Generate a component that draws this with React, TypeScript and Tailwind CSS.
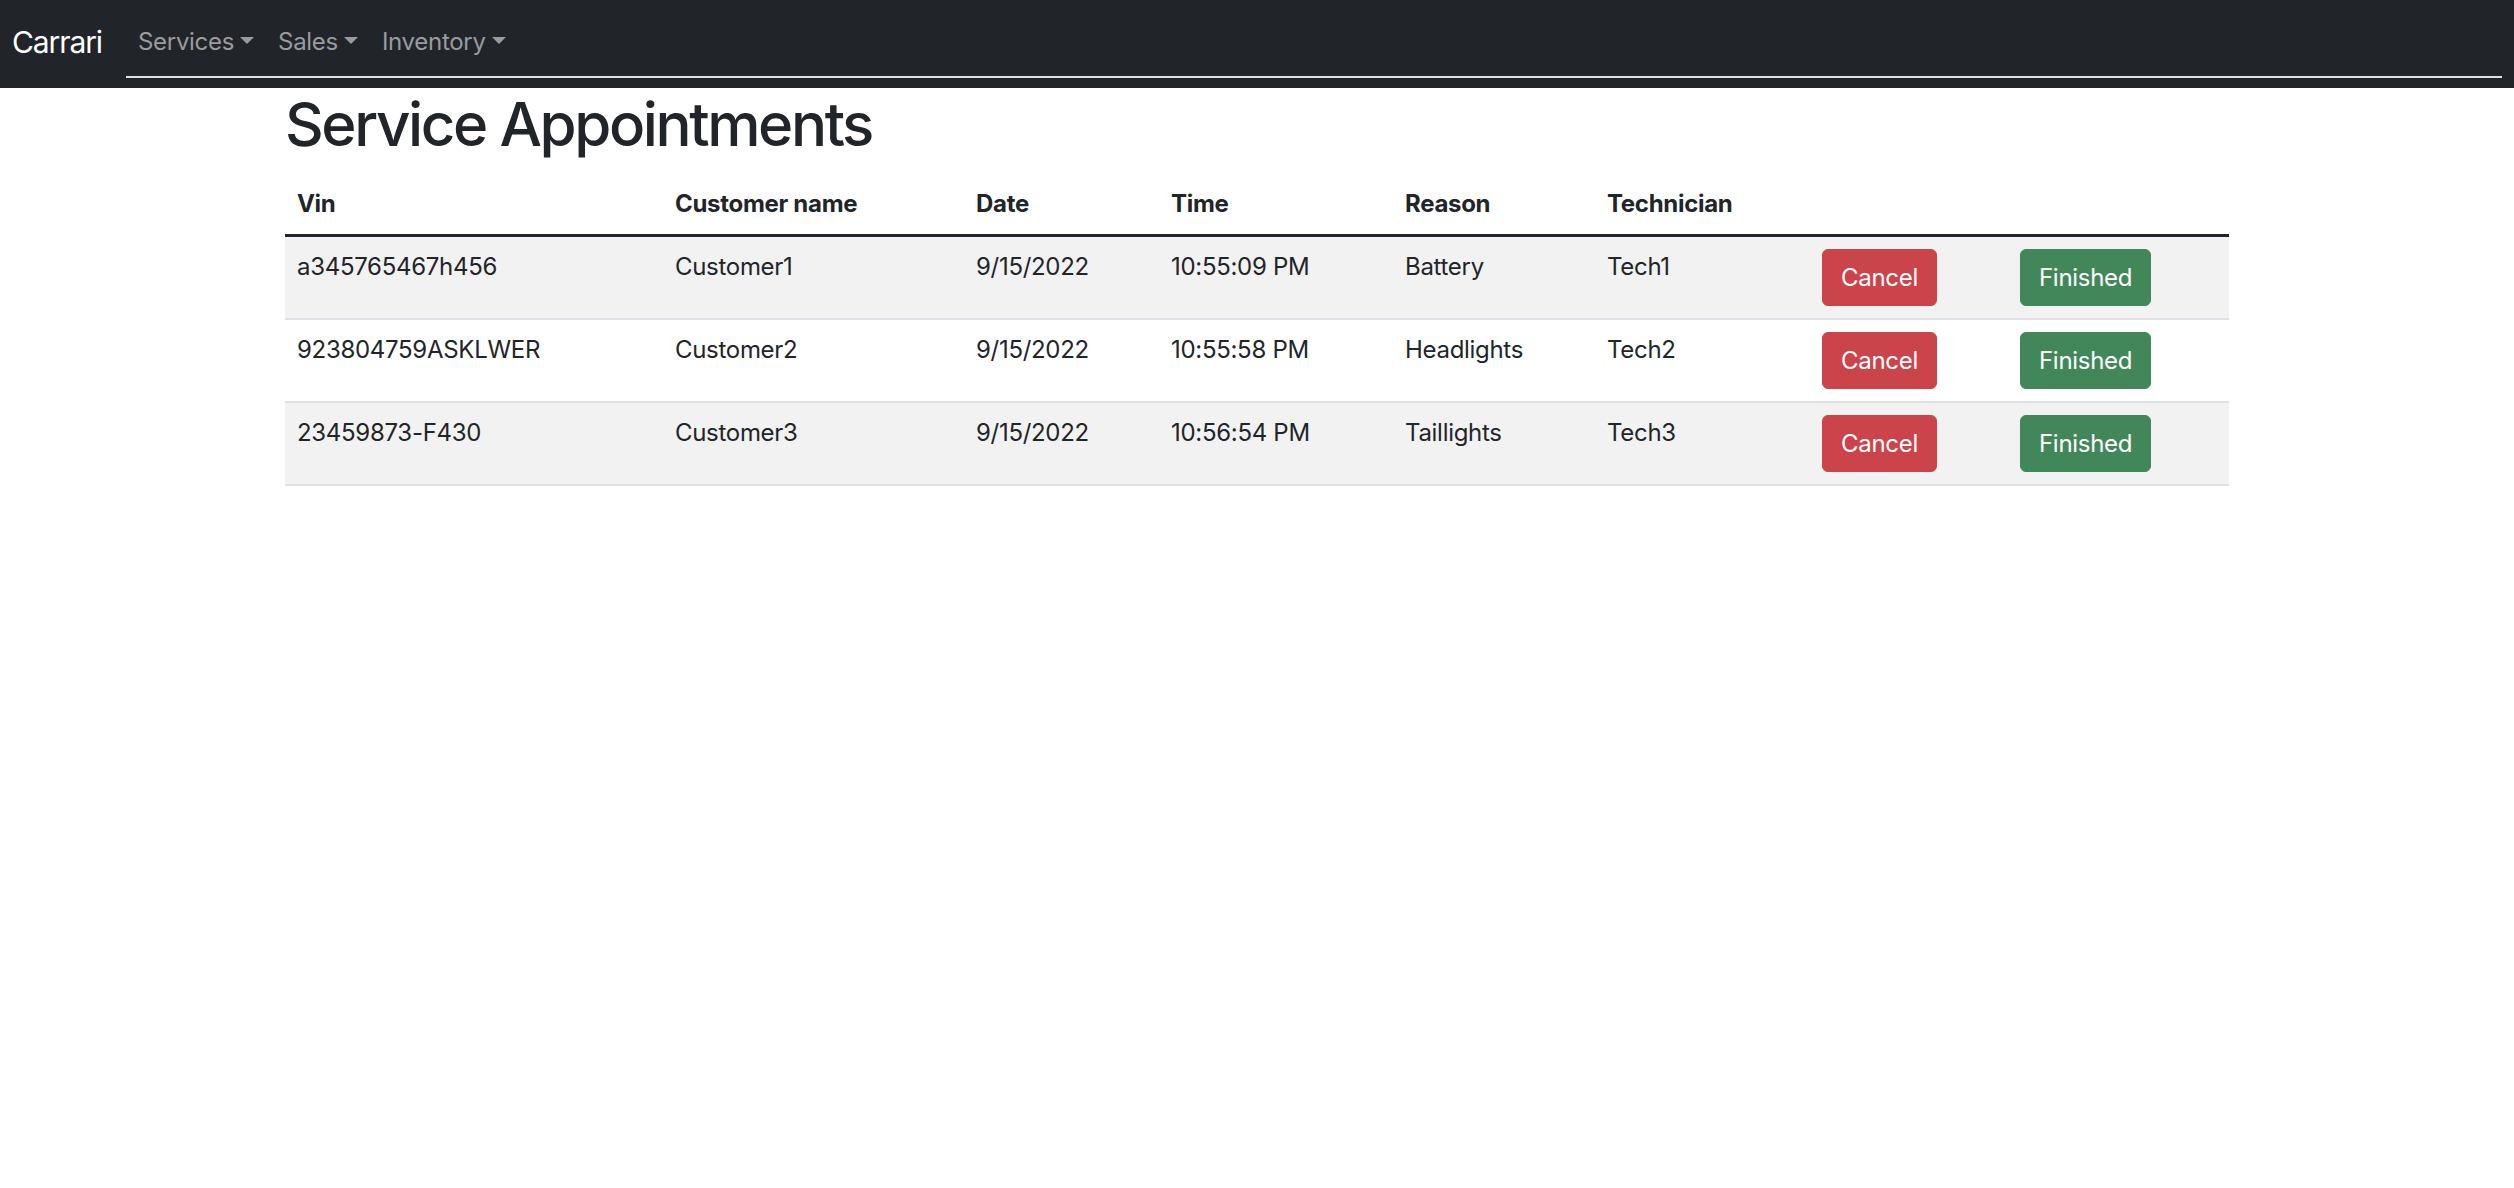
import React from "react";

const rows = [
  { vin: "a345765467h456", customer: "Customer1", date: "9/15/2022", time: "10:55:09 PM", reason: "Battery", tech: "Tech1" },
  { vin: "923804759ASKLWER", customer: "Customer2", date: "9/15/2022", time: "10:55:58 PM", reason: "Headlights", tech: "Tech2" },
  { vin: "23459873-F430", customer: "Customer3", date: "9/15/2022", time: "10:56:54 PM", reason: "Taillights", tech: "Tech3" },
];

function Caret() {
  return (
    <span className="inline-block ml-[6px] align-[6px] w-0 h-0 border-t-[7px] border-x-[7px] border-t-current border-x-transparent" />
  );
}

export default function App() {
  const font = { fontFamily: "Inter, 'Noto Sans', 'Liberation Sans', sans-serif" };
  return (
    <div className="min-h-[1188px] bg-white text-[#212529]" style={font}>
      <nav className="h-[88px] bg-[#212529] flex items-start px-[12px] pt-[12px]">
        <a className="text-white text-[30px] leading-[45px] pt-[8px] mr-[24px] tracking-[-1.1px]">Carrari</a>
        <div className="flex-1 flex flex-col">
          <ul className="flex h-[60px] items-start">
            {["Services", "Sales", "Inventory"].map((l) => (
              <li key={l} className="px-[12px] py-[12px] text-[24px] leading-[36px] text-[#999b9d] tracking-[-0.3px]">
                {l}
                <Caret />
              </li>
            ))}
          </ul>
          <div className="mt-[4px] h-[1.5px] bg-[#dfe1e4]" />
        </div>
      </nav>
      <div className="mx-auto w-[1980px] px-[18px]">
        <h1 className="text-[60px] leading-[72px] font-medium mb-[14px] tracking-[-2.4px]">Service Appointments</h1>
        <table className="w-full table-fixed border-collapse text-[24px] leading-[36px] tracking-[-0.3px]">
          <colgroup>
            <col className="w-[378px]" />
            <col className="w-[301px]" />
            <col className="w-[195px]" />
            <col className="w-[234px]" />
            <col className="w-[202px]" />
            <col className="w-[215px]" />
            <col className="w-[198px]" />
            <col className="w-[221px]" />
          </colgroup>
          <thead>
            <tr className="border-b-[3px] border-[#212529]">
              {["Vin", "Customer name", "Date", "Time", "Reason", "Technician", "", ""].map((h, i) => (
                <th key={i} className="p-[12px] text-left font-bold align-top">{h}</th>
              ))}
            </tr>
          </thead>
          <tbody>
            {rows.map((r, i) => (
              <tr key={i} className={`border-b-2 border-[#dee2e6] ${i % 2 === 0 ? "bg-[#f2f2f2]" : "bg-white"}`}>
                <td className="p-[12px] align-top">{r.vin}</td>
                <td className="p-[12px] align-top">{r.customer}</td>
                <td className="p-[12px] align-top">{r.date}</td>
                <td className="p-[12px] align-top">{r.time}</td>
                <td className="p-[12px] align-top">{r.reason}</td>
                <td className="p-[12px] align-top">{r.tech}</td>
                <td className="p-[12px] align-top">
                  <button className="block px-[18px] pt-[10px] pb-[9px] border border-[#cb444b] bg-[#cb444b] text-white rounded-[6px] text-[24px] leading-[36px] tracking-[-0.3px]">Cancel</button>
                </td>
                <td className="p-[12px] align-top">
                  <button className="block px-[18px] pt-[10px] pb-[9px] border border-[#41875a] bg-[#41875a] text-white rounded-[6px] text-[24px] leading-[36px] tracking-[-0.3px]">Finished</button>
                </td>
              </tr>
            ))}
          </tbody>
        </table>
      </div>
    </div>
  );
}
